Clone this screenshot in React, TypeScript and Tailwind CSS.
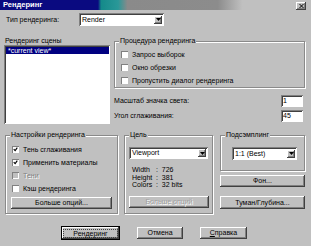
import type { ReactNode } from 'react';

// Win98-style bevels
const raised =
  'bg-[#c0c0c0] shadow-[inset_-1px_-1px_0_#404040,inset_1px_1px_0_#ffffff,inset_-2px_-2px_0_#808080]';
const sunken =
  'bg-white shadow-[inset_1px_1px_0_#808080,inset_-1px_-1px_0_#ffffff,inset_2px_2px_0_#404040]';

function Check({ label, checked, disabled }: { label: string; checked?: boolean; disabled?: boolean }) {
  return (
    <div className="flex items-center h-[13px]">
      <div
        className={`w-[7px] h-[7px] flex items-center justify-center ${
          disabled
            ? 'bg-[#c0c0c0] shadow-[inset_1px_1px_0_#808080,inset_-1px_-1px_0_#ffffff]'
            : 'bg-white shadow-[inset_1px_1px_0_#808080,inset_-1px_-1px_0_#ffffff]'
        }`}
      >
        {checked && (
          <svg width="5" height="5" viewBox="0 0 7 7">
            <path d="M1 3 L3 5 L6 1" stroke="#000" strokeWidth="1.6" fill="none" />
          </svg>
        )}
      </div>
      <span
        className={`ml-[4px] ${disabled ? 'text-[#808080] [text-shadow:1px_1px_0_#fff]' : 'text-black'}`}
      >
        {label}
      </span>
    </div>
  );
}

function Select({ value, className }: { value: string; className: string }) {
  return (
    <div className={`${sunken} flex items-center pl-[3px] pr-[2px] ${className}`}>
      <span className="flex-1">{value}</span>
      <div className={`${raised} w-[8px] h-[8px] flex items-center justify-center`}>
        <svg width="5" height="3" viewBox="0 0 5 3">
          <path d="M0 0 H5 L2.5 3 Z" fill="#000" />
        </svg>
      </div>
    </div>
  );
}

function Button({
  children,
  className,
  disabled,
  primary,
}: {
  children: ReactNode;
  className: string;
  disabled?: boolean;
  primary?: boolean;
}) {
  return (
    <div
      className={`${raised} flex items-center justify-center ${
        primary ? 'outline outline-1 outline-black' : ''
      } ${disabled ? 'text-[#a0a0a0] [text-shadow:1px_1px_0_#fff]' : 'text-black'} ${className}`}
    >
      {primary ? (
        <span className="border border-dotted border-[#404040] px-[9px] leading-[7px]">{children}</span>
      ) : (
        children
      )}
    </div>
  );
}

function Group({
  title,
  className,
  inner,
  children,
}: {
  title: string;
  className: string;
  inner: string;
  children: ReactNode;
}) {
  return (
    <fieldset
      className={`border border-[#8a8a8a] shadow-[inset_1px_1px_0_#ffffff,1px_1px_0_#ffffff] ${className}`}
    >
      <legend className="ml-[4px] px-[1px] h-[8px] leading-[8px] bg-[#c0c0c0]">{title}</legend>
      <div className={inner}>{children}</div>
    </fieldset>
  );
}

export default function App() {
  return (
    <div
      className="w-[311px] h-[246px] bg-[#c0c0c0] overflow-hidden text-[7px] leading-[8px] text-black"
      style={{ fontFamily: '"Liberation Sans", Arial, sans-serif' }}
    >
      {/* заголовок */}
      <div className="h-[10px] flex items-center pl-[3px] bg-[linear-gradient(to_right,#0a0a80_0%,#0a0a80_31.5%,#148a8a_32.5%,#2a9898_38%,#8a8a8a_41%,#8c8c8c_70%,#c0c0c0_78%)]">
        <span className="text-white font-bold text-[7.5px]">Рендеринг</span>
        <div className={`${raised} ml-auto mr-[5px] mt-[1px] w-[10px] h-[8px] flex items-center justify-center`}>
          <svg width="5" height="4" viewBox="0 0 5 4">
            <path d="M0.5 0 L4.5 4 M4.5 0 L0.5 4" stroke="#000" strokeWidth="1" />
          </svg>
        </div>
      </div>

      {/* тип рендеринга */}
      <div className="mt-[3px] h-[13px] flex items-center pl-[6px]">
        <span className="w-[73px]">Тип рендеринга:</span>
        <Select value="Render" className="w-[85px] h-[13px]" />
      </div>

      <div className="mt-[11px] flex pl-[4px]">
        <div className="w-[106px]">
          <div className="h-[8px] leading-[8px] pl-[1px]">Рендеринг сцены</div>
          <div className={`${sunken} h-[79px] p-[1px]`}>
            <div className="ml-[1px] mt-[1px] h-[7px] leading-[7px] bg-[#000080] text-white pl-[2px]">
              *current view*
            </div>
          </div>
        </div>

        <div className="ml-[4px] w-[191px]">
          <Group title="Процедура рендеринга" className="" inner="pt-[3px] pl-[6px]">
            <Check label="Запрос выборок" />
            <Check label="Окно обрезки" />
            <Check label="Пропустить диалог рендеринга" />
          </Group>
          <div className="mt-[7px] flex items-center justify-between pr-[2px] h-[12px]">
            <span>Масштаб значка света:</span>
            <div className={`${sunken} w-[22px] h-[12px] pl-[2px] flex items-center`}>1</div>
          </div>
          <div className="mt-[3px] flex items-center justify-between pr-[2px] h-[12px]">
            <span>Угол сглаживания:</span>
            <div className={`${sunken} w-[22px] h-[12px] pl-[2px] flex items-center`}>45</div>
          </div>
        </div>
      </div>

      <div className="mt-[7px] flex pl-[5px] items-start">
        <Group title="Настройки рендеринга" className="w-[113px] h-[83px]" inner="pt-[4px] pl-[6px]">
          <Check label="Тень сглаживания" checked />
          <Check label="Применить материалы" checked />
          <Check label="Тени" disabled />
          <Check label="Кэш рендеринга" />
          <Button className="mt-[2px] w-[101px] h-[12px] -ml-[1px]">Больше опций...</Button>
        </Group>

        <Group title="Цель" className="ml-[6px] w-[89px] h-[83px]" inner="pt-[8px] pl-[4px]">
          <Select value="Viewport" className="w-[79px] h-[12px]" />
          <div className="mt-[7px] ml-[3px] leading-[7.5px]">
            <div className="flex">
              <span className="w-[24px]">Width</span>
              <span>:&nbsp;&nbsp;726</span>
            </div>
            <div className="flex">
              <span className="w-[24px]">Height</span>
              <span>:&nbsp;&nbsp;381</span>
            </div>
            <div className="flex">
              <span className="w-[24px]">Colors</span>
              <span>:&nbsp;&nbsp;32 bits</span>
            </div>
          </div>
          <Button disabled className="mt-[7px] w-[80px] h-[12px]">
            Больше опций
          </Button>
        </Group>

        <div className="ml-[7px] w-[85px]">
          <Group title="Подсэмплинг" className="h-[40px]" inner="pt-[8px] pl-[11px]">
            <Select value="1:1 (Best)" className="w-[65px] h-[13px]" />
          </Group>
          <Button className="mt-[4px] w-[85px] h-[12px]">Фон...</Button>
          <Button className="mt-[9px] w-[85px] h-[13px]">Туман/Глубина...</Button>
        </div>
      </div>

      <div className="mt-[13px] flex pl-[62px]">
        <Button primary className="w-[57px] h-[12px]">
          Рендеринг
        </Button>
        <Button className="ml-[18px] w-[46px] h-[12px]">Отмена</Button>
        <Button className="ml-[17px] w-[47px] h-[12px]">
          <span>
            <span className="underline">С</span>правка
          </span>
        </Button>
      </div>
    </div>
  );
}
